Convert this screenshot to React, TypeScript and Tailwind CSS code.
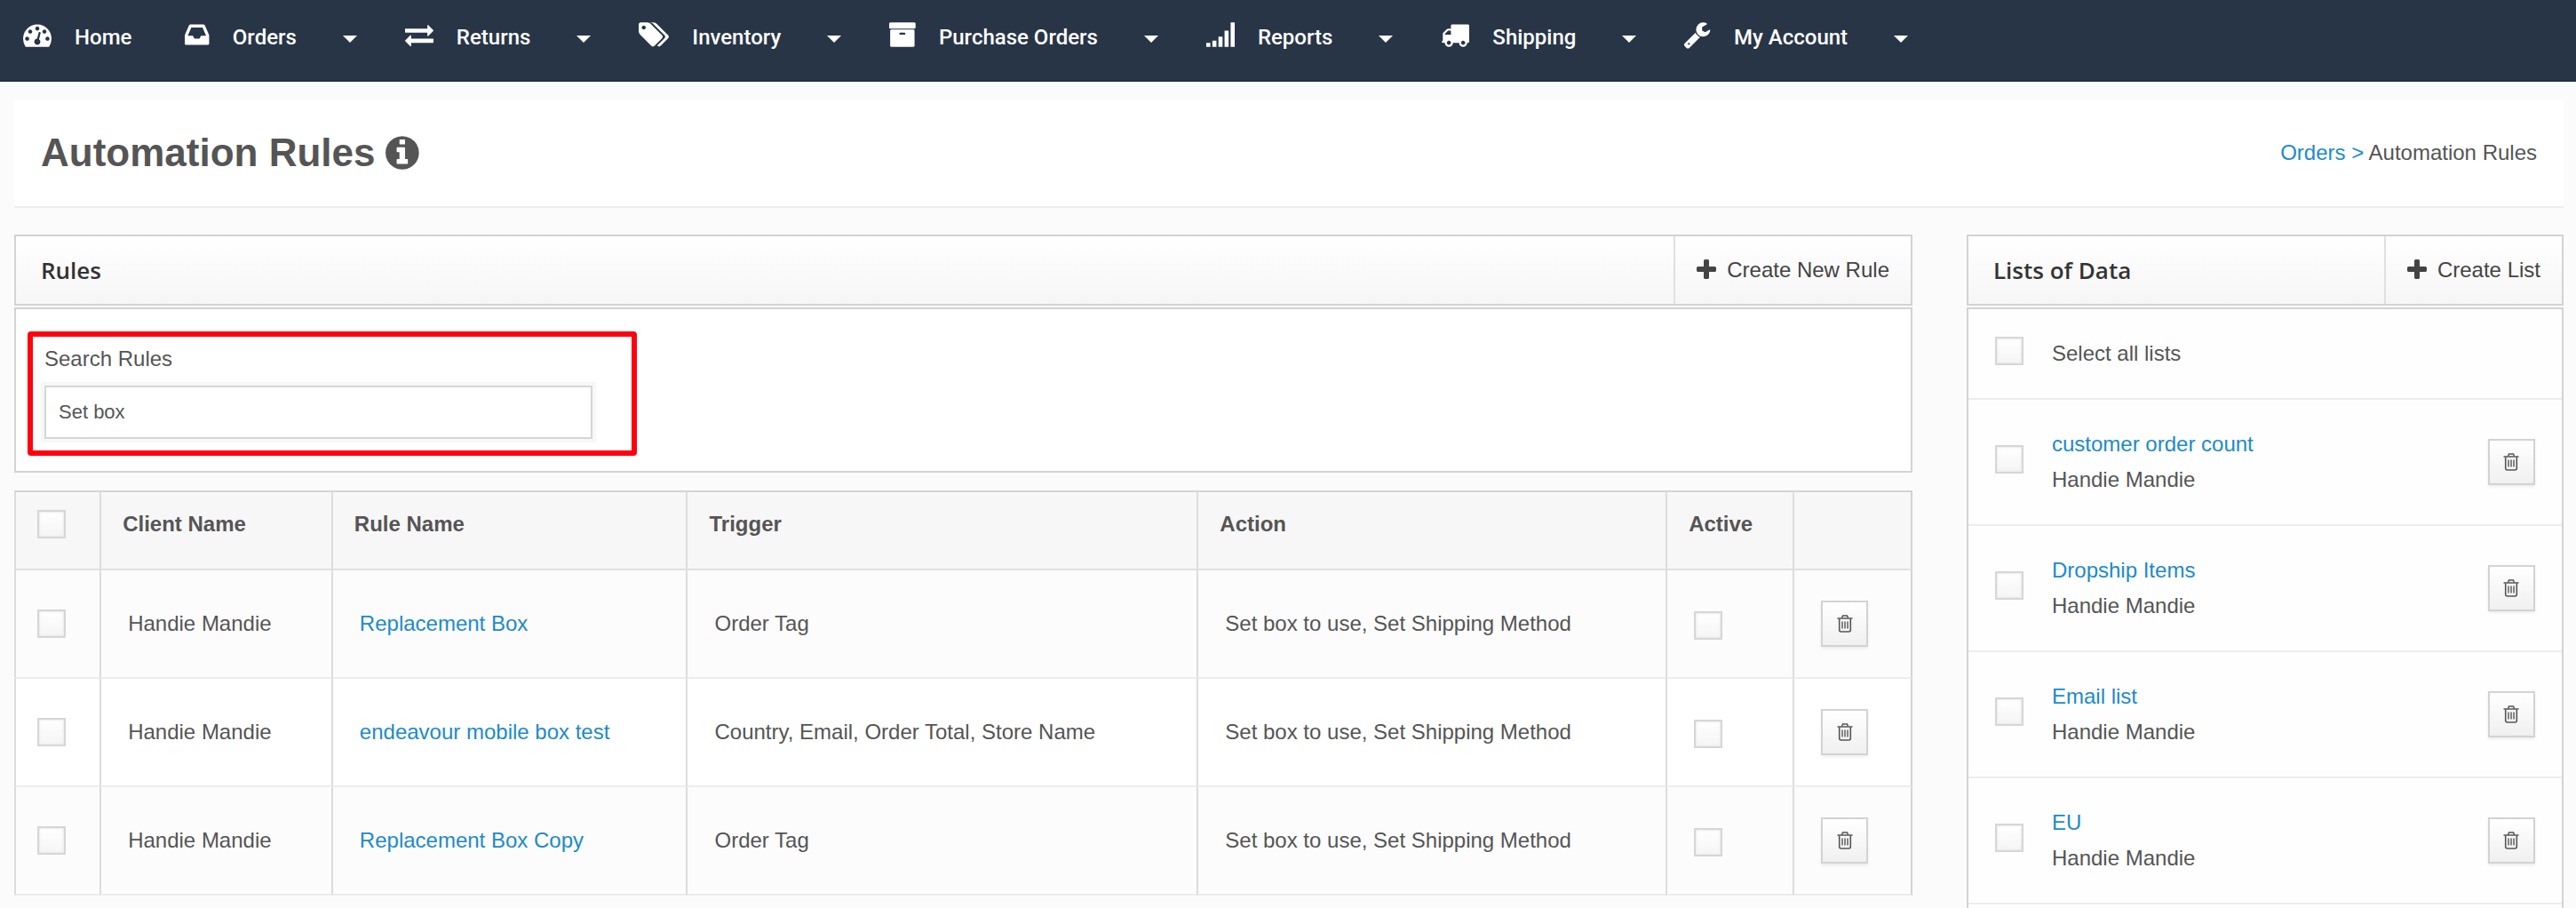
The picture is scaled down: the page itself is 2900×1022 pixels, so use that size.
import { useState } from 'react';
import type { ReactNode } from 'react';

interface NavItem {
  label: string;
  icon: string;
  menu: boolean;
}

interface Rule {
  id: number;
  client: string;
  name: string;
  trigger: string;
  action: string;
}

interface DataList {
  id: number;
  name: string;
  client: string;
}

const nav: NavItem[] = [
  { label: 'Home', icon: 'tachometer', menu: false },
  { label: 'Orders', icon: 'inbox', menu: true },
  { label: 'Returns', icon: 'exchange', menu: true },
  { label: 'Inventory', icon: 'tags', menu: true },
  { label: 'Purchase Orders', icon: 'archive', menu: true },
  { label: 'Reports', icon: 'signal', menu: true },
  { label: 'Shipping', icon: 'truck', menu: true },
  { label: 'My Account', icon: 'wrench', menu: true },
];

const rules: Rule[] = [
  { id: 1, client: 'Handie Mandie', name: 'Replacement Box', trigger: 'Order Tag', action: 'Set box to use, Set Shipping Method' },
  { id: 2, client: 'Handie Mandie', name: 'endeavour mobile box test', trigger: 'Country, Email, Order Total, Store Name', action: 'Set box to use, Set Shipping Method' },
  { id: 3, client: 'Handie Mandie', name: 'Replacement Box Copy', trigger: 'Order Tag', action: 'Set box to use, Set Shipping Method' },
];

const lists: DataList[] = [
  { id: 1, name: 'customer order count', client: 'Handie Mandie' },
  { id: 2, name: 'Dropship Items', client: 'Handie Mandie' },
  { id: 3, name: 'Email list', client: 'Handie Mandie' },
  { id: 4, name: 'EU', client: 'Handie Mandie' },
];

const icons: Record<string, { box: string; d: string }> = {
  tachometer: {
    box: '0 0 1792 1792',
    d: 'M384 1152q0-53-37.500-90.500t-90.500-37.500-90.500 37.500-37.500 90.500 37.500 90.500 90.500 37.500 90.500-37.500 37.500-90.500zm192-448q0-53-37.500-90.500t-90.500-37.500-90.500 37.500-37.500 90.500 37.500 90.500 90.500 37.500 90.500-37.500 37.500-90.500zm428 481l101-382q6-26-7.500-48.500t-38.500-29.500-48 6.500-30 39.500l-101 382q-60 5-107 43.500t-63 98.500q-20 77 20 146t117 89 146-20 89-117q16-60-6-117t-72-91zm660-33q0-53-37.500-90.500t-90.500-37.500-90.500 37.500-37.500 90.500 37.500 90.500 90.500 37.500 90.500-37.500 37.500-90.500zm-640-640q0-53-37.500-90.500t-90.500-37.500-90.500 37.500-37.500 90.500 37.500 90.500 90.500 37.500 90.500-37.500 37.500-90.500zm448 192q0-53-37.500-90.500t-90.500-37.500-90.500 37.500-37.500 90.500 37.500 90.500 90.500 37.500 90.500-37.500 37.500-90.500zm320 448q0 261-141 483-19 29-54 29h-1402q-35 0-54-29-141-221-141-483 0-182 71-348t191-286 286-191 348-71 348 71 286 191 191 286 71 348z',
  },
  inbox: {
    box: '0 0 1536 1792',
    d: 'M1023 960h316q-1-3-2.500-8.500t-2.500-7.500l-212-496h-708l-212 496q-1 3-2.500 8.500t-2.500 7.500h316l95 192h320zm513 30v482q0 26-19 45t-45 19h-1408q-26 0-45-19t-19-45v-482q0-62 25-123l238-552q10-25 36.500-42t52.500-17h832q26 0 52.500 17t36.500 42l238 552q25 61 25 123z',
  },
  exchange: {
    box: '0 0 1792 1792',
    d: 'M1792 1184v192q0 13-9.500 22.500t-22.500 9.500h-1376v192q0 13-9.500 22.500t-22.500 9.500q-12 0-24-10l-319-320q-9-9-9-22 0-14 9-23l320-320q9-9 23-9 13 0 22.500 9.500t9.500 22.500v192h1376q13 0 22.500 9.500t9.500 22.500zm0-544q0 14-9 23l-320 320q-9 9-23 9-13 0-22.500-9.500t-9.500-22.500v-192h-1376q-13 0-22.500-9.500t-9.500-22.500v-192q0-13 9.500-22.500t22.500-9.500h1376v-192q0-14 9-23t23-9q12 0 24 10l319 319q9 9 9 23z',
  },
  tags: {
    box: '128 0 1904 1792',
    d: 'M576 448q0-53-37.500-90.500t-90.500-37.500-90.500 37.500-37.500 90.500 37.500 90.500 90.500 37.500 90.500-37.500 37.500-90.500zm1067 576q0 53-37 90l-491 492q-39 37-91 37-53 0-90-37l-715-716q-38-37-64.500-101t-26.500-117v-416q0-52 38-90t90-38h416q53 0 117 26.500t102 64.500l715 714q37 39 37 91zm384 0q0 53-37 90l-491 492q-39 37-91 37-36 0-59-14t-53-45l470-470q37-37 37-90 0-52-37-91l-715-714q-38-38-102-64.500t-117-26.500h224q53 0 117 26.500t102 64.500l715 714q37 39 37 91z',
  },
  archive: {
    box: '64 0 1664 1792',
    d: 'M1088 832q0-26-19-45t-45-19h-256q-26 0-45 19t-19 45 19 45 45 19h256q26 0 45-19t19-45zm576-192v960q0 26-19 45t-45 19h-1408q-26 0-45-19t-19-45v-960q0-26 19-45t45-19h1408q26 0 45 19t19 45zm64-448v256q0 26-19 45t-45 19h-1536q-26 0-45-19t-19-45v-256q0-26 19-45t45-19h1536q26 0 45 19t19 45z',
  },
  signal: {
    box: '0 0 1792 1792',
    d: 'M0 1408h256v256h-256zM384 1280h256v384h-256zM768 1024h256v640h-256zM1152 640h256v1024h-256zM1536 128h256v1536h-256z',
  },
  truck: {
    box: '0 0 1792 1792',
    d: 'M640 1408q0-52-38-90t-90-38-90 38-38 90 38 90 90 38 90-38 38-90zm-384-512h384v-256h-158q-13 0-22 9l-195 195q-9 9-9 22v30zm1280 512q0-52-38-90t-90-38-90 38-38 90 38 90 90 38 90-38 38-90zm256-1088v1024q0 15-4 26.500t-13.500 18.500-16.500 11.500-23.500 6-22.500 2-25.500 0-22.500-.5q0 106-75 181t-181 75-181-75-75-181h-384q0 106-75 181t-181 75-181-75-75-181h-64q-3 0-22.500.5t-25.500 0-22.500-2-23.500-6-16.500-11.500-13.500-18.500-4-26.500q0-26 19-45t45-19v-320q0-8-.5-35t0-38 2.500-34.500 6.500-37 14-30.500 22.500-30l198-198q19-19 50.500-32t58.500-13h160v-192q0-26 19-45t45-19h1024q26 0 45 19t19 45z',
  },
  wrench: {
    box: '85 0 1664 1792',
    d: 'M448 1472q0-26-19-45t-45-19-45 19-19 45 19 45 45 19 45-19 19-45zm644-420l-682 682q-37 37-90 37-52 0-91-37l-106-108q-38-36-38-90 0-53 38-91l681-681q39 98 114.500 173.500t173.500 114.500zm634-435q0 39-23 106-47 134-164.500 217.500t-258.500 83.500q-185 0-316.500-131.500t-131.500-316.500 131.500-316.500 316.500-131.500q58 0 121.500 16.500t107.500 46.500q16 11 16 28t-16 28l-293 169v224l193 107q5-3 79-48.500t135.500-81 70.500-35.500q15 0 23.500 10t8.500 25z',
  },
  plus: {
    box: '192 0 1408 1792',
    d: 'M1600 736v192q0 40-28 68t-68 28h-416v416q0 40-28 68t-68 28h-192q-40 0-68-28t-28-68v-416h-416q-40 0-68-28t-28-68v-192q0-40 28-68t68-28h416v-416q0-40 28-68t68-28h192q40 0 68 28t28 68v416h416q40 0 68 28t28 68z',
  },
  info: {
    box: '128 0 1536 1792',
    d: 'M1152 1376v-160q0-14-9-23t-23-9h-96v-512q0-14-9-23t-23-9h-320q-14 0-23 9t-9 23v160q0 14 9 23t23 9h96v320h-96q-14 0-23 9t-9 23v160q0 14 9 23t23 9h448q14 0 23-9t9-23zm-128-896v-160q0-14-9-23t-23-9h-192q-14 0-23 9t-9 23v160q0 14 9 23t23 9h192q14 0 23-9t9-23zm640 416q0 209-103 385.500t-279.500 279.500-385.500 103-385.500-103-279.500-279.500-103-385.500 103-385.500 279.500-279.500 385.500-103 385.500 103 279.500 279.500 103 385.500z',
  },
};

function Icon({ name, className }: { name: string; className: string }) {
  return (
    <svg viewBox={icons[name].box} className={`w-auto shrink-0 ${className}`} fill="currentColor" aria-hidden="true">
      <path d={icons[name].d} />
    </svg>
  );
}

function Checkbox({ label }: { label: string }) {
  return (
    <input
      type="checkbox"
      aria-label={label}
      className="block size-8 shrink-0 appearance-none border-2 border-[#d6d6d6] bg-linear-to-b from-white to-[#f5f5f5] shadow-[inset_0_0_2px_1px_#ebebeb] checked:bg-[#1c8bc9]"
    />
  );
}

function TrashButton({ label }: { label: string }) {
  return (
    <button
      type="button"
      aria-label={label}
      className="flex h-[52px] w-[53px] shrink-0 items-center justify-center border-2 border-[#d3d3d3] bg-linear-to-b from-white to-[#f0f0f0] text-[#555] shadow-[0_2px_3px_#00000012]"
    >
      <svg viewBox="0 0 18 20" className="h-5 w-[18px]" fill="none" stroke="currentColor" aria-hidden="true">
        <path d="M.5 4h17" strokeWidth="1.5" />
        <path d="M5.5 3.500l1-2.500h5l1 2.500" strokeWidth="1.500" />
        <path d="M2.700 4.500v12.500q0 2 2 2h8.600q2 0 2-2v-12.500" strokeWidth="1.600" />
        <path d="M6 7.500v8M9 7.500v8M12 7.500v8" strokeWidth="1.400" />
      </svg>
    </button>
  );
}

function PanelHeader({ title, action }: { title: string; action: string }) {
  return (
    <div className="flex h-20 items-stretch justify-between border-2 border-[#d3d3d3] bg-linear-to-b from-white to-[#f6f6f6]">
      <h2 className="flex items-center pl-7 font-['Open_Sans',sans-serif] text-[26px] font-semibold text-[#333]">{title}</h2>
      <button type="button" className="flex items-center gap-3 border-l-2 border-[#e0e0e0] px-6 text-[#444]">
        <Icon name="plus" className="h-7" />
        {action}
      </button>
    </div>
  );
}

function Th({ children }: { children?: ReactNode }) {
  return (
    <th className="border-y-2 border-l-2 border-t-[#d3d3d3] border-b-[#e0e0e0] border-l-[#dcdcdc] bg-[#f7f7f7] px-6 pt-5 pb-[34px] text-left align-top leading-8 font-bold last:border-r-2 last:border-r-[#d3d3d3]">
      {children}
    </th>
  );
}

function Td({ children, className }: { children: ReactNode; className: string }) {
  return (
    <td className={`h-[122px] border-b-2 border-l-2 border-b-[#ededed] border-l-[#dcdcdc] align-middle last:border-r-2 last:border-r-[#d3d3d3] ${className}`}>
      {children}
    </td>
  );
}

export default function App() {
  const [search, setSearch] = useState('Set box');

  return (
    <div className="flex min-h-screen flex-col bg-[#fbfbfb] font-['Liberation_Sans',Arial,sans-serif] text-[24px] leading-8 text-[#555]">
      <nav className="flex h-[92px] items-start border-b-2 border-[#223044] bg-[#283547] pt-[23px] pl-[26px] font-['Roboto',sans-serif] font-medium text-white">
        {nav.map(item => (
          <div key={item.label} className={item.menu ? 'mr-[54px] flex' : 'mr-15 flex'}>
            <a href="#" className="flex gap-[26px]">
              <Icon name={item.icon} className="h-8" />
              <span className="pt-[3px]">{item.label}</span>
            </a>
            {item.menu && (
              <button type="button" aria-label={`${item.label} menu`} className="ml-[52px] flex h-[42px] items-center">
                <svg viewBox="0 0 16 8" className="h-2 w-4" fill="currentColor" aria-hidden="true">
                  <path d="M0 0h16l-8 8z" />
                </svg>
              </button>
            )}
          </div>
        ))}
      </nav>

      <header className="mt-5 mr-3.5 ml-4 flex h-[122px] items-center justify-between border-b-2 border-[#ededed] bg-white px-[30px]">
        <h1 className="flex items-center gap-3 text-[44px] font-bold">
          Automation Rules
          <Icon name="info" className="h-11" />
        </h1>
        <div>
          <a href="#" className="text-[#1c8bc9]">Orders &gt;</a> Automation Rules
        </div>
      </header>

      <main className="mt-[30px] mr-3.5 ml-4 grid flex-1 grid-cols-[3.18fr_1fr] gap-x-[61px]">
        <section className="self-start">
          <PanelHeader title="Rules" action="Create New Rule" />

          <div className="mt-0.5 flex border-2 border-[#d3d3d3] bg-white pt-[25px] pb-[17px] pl-[13px]">
            {/* highlighted search group */}
            <div className="w-[686px] rounded-sm border-6 border-[#ff0010] px-[13px] pt-[9px] pb-[13px]">
              <label htmlFor="search" className="block">Search Rules</label>
              <input
                id="search"
                type="text"
                value={search}
                onChange={e => setSearch(e.target.value)}
                className="mt-3.5 block h-15 w-[617px] border-2 border-[#d6d6d6] bg-white px-3.5 text-[22px] shadow-[0_0_0_4px_#f7f7f7] outline-none"
              />
            </div>
          </div>

          <table className="mt-5 w-full table-fixed border-separate border-spacing-0">
            <colgroup>
              <col className="w-[4.5%]" />
              <col className="w-[12.2%]" />
              <col className="w-[18.7%]" />
              <col className="w-[26.9%]" />
              <col className="w-[24.7%]" />
              <col className="w-[6.7%]" />
              <col className="w-[6.3%]" />
            </colgroup>
            <thead>
              <tr>
                <Th><Checkbox label="Select all rules" /></Th>
                <Th>Client Name</Th>
                <Th>Rule Name</Th>
                <Th>Trigger</Th>
                <Th>Action</Th>
                <Th>Active</Th>
                <Th />
              </tr>
            </thead>
            <tbody>
              {rules.map(r => (
                <tr key={r.id} className="bg-[#fcfcfc] even:bg-white">
                  <Td className="px-6"><Checkbox label={`Select ${r.name}`} /></Td>
                  <Td className="px-[30px]">{r.client}</Td>
                  <Td className="px-[30px]"><a href="#" className="text-[#1c8bc9]">{r.name}</a></Td>
                  <Td className="px-[30px]">{r.trigger}</Td>
                  <Td className="px-[30px]">{r.action}</Td>
                  <Td className="px-[30px] pt-1"><Checkbox label={`${r.name} active`} /></Td>
                  <Td className="px-[30px]"><TrashButton label={`Delete ${r.name}`} /></Td>
                </tr>
              ))}
            </tbody>
          </table>
        </section>

        <section className="flex flex-col">
          <PanelHeader title="Lists of Data" action="Create List" />

          <ul className="mt-0.5 flex-1 border-x-2 border-t-2 border-[#d3d3d3] bg-[#fefefe]">
            <li className="flex h-[102px] items-center gap-8 border-b-2 border-[#ededed] px-[30px]">
              <div className="pb-1.5"><Checkbox label="Select all lists" /></div>
              <span>Select all lists</span>
            </li>
            {lists.map(l => (
              <li key={l.id} className="flex h-[142px] items-center gap-8 border-b-2 border-[#ededed] px-[30px]">
                <div className="pb-1.5"><Checkbox label={`Select ${l.name}`} /></div>
                <div className="flex-1 leading-10">
                  <a href="#" className="block text-[#1c8bc9]">{l.name}</a>
                  {l.client}
                </div>
                <TrashButton label={`Delete ${l.name}`} />
              </li>
            ))}
          </ul>
        </section>
      </main>
    </div>
  );
}
